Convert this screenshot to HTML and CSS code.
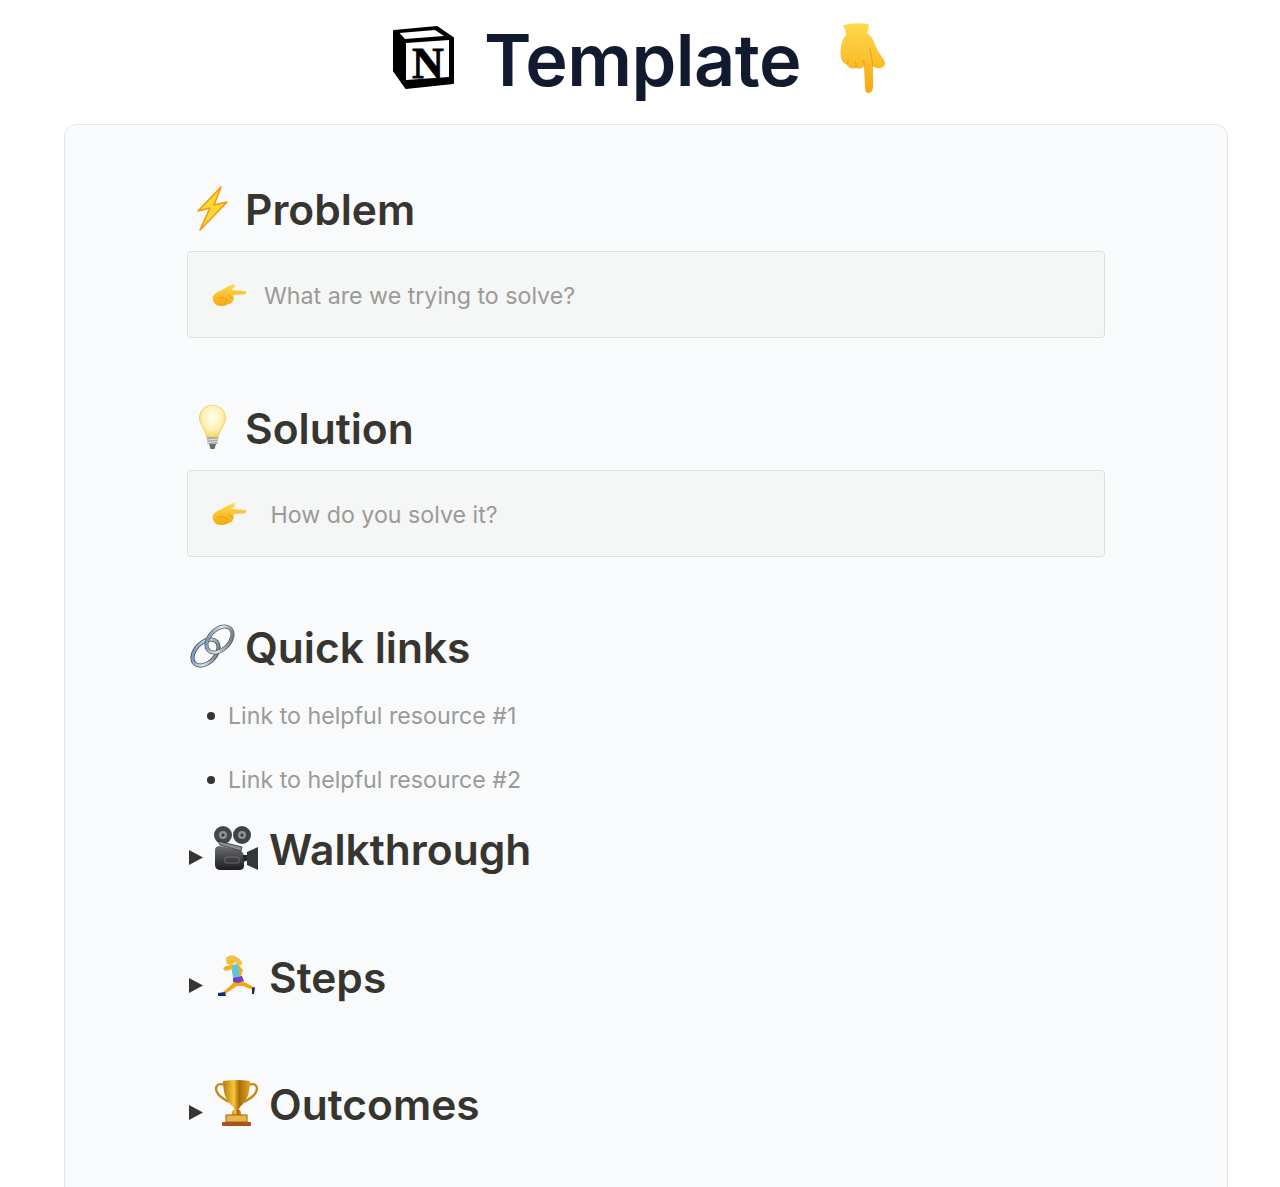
FILE: index.html
```html
<!DOCTYPE html>
<html lang="en">
<head>
<meta charset="utf-8">
<title>Notion Template</title>
<link rel="stylesheet" href="styles.css">
</head>
<body>
<svg class="defs" width="0" height="0" aria-hidden="true">
  <defs>
    <linearGradient id="skin" x1="0" y1="0" x2="0" y2="1"><stop offset="0" stop-color="#ffd84f"/><stop offset="1" stop-color="#f6a90f"/></linearGradient>
    <radialGradient id="glass" cx=".5" cy=".38" r=".6"><stop offset="0" stop-color="#fffef2"/><stop offset=".6" stop-color="#fff3b8"/><stop offset="1" stop-color="#f6d659"/></radialGradient>
    <linearGradient id="gold" x1="0" y1="0" x2="1" y2="0"><stop offset="0" stop-color="#b97a0c"/><stop offset=".4" stop-color="#f6c63c"/><stop offset=".6" stop-color="#a86a08"/><stop offset="1" stop-color="#e2a524"/></linearGradient>
    <linearGradient id="steel" x1="0" y1="0" x2="1" y2="1"><stop offset="0" stop-color="#4f7fb8"/><stop offset=".5" stop-color="#dfe7ef"/><stop offset="1" stop-color="#48586c"/></linearGradient>
    <linearGradient id="body" x1="0" y1="0" x2="0" y2="1"><stop offset="0" stop-color="#6a6e74"/><stop offset="1" stop-color="#1d1a1c"/></linearGradient>
    <symbol id="hand-right" viewBox="0 0 35 22">
      <path fill="url(#skin)" d="M.5 13 Q3 8 9 6.500 Q14 3 21 .3 Q23.500 .3 22.500 3 L19.500 6 L33 7 Q35.500 8.500 33 10.300 L21 11 Q22.500 14 21 16 Q20.500 19.500 16.500 20 Q13 22.500 7 21.800 Q1 21 .5 13 Z"/>
      <path fill="none" stroke="#dd9208" stroke-width=".7" d="M6 14 Q12 13 15 15 M12 20 Q15 18 15 15 M16 11 Q19 12 21 16"/>
    </symbol>
    <symbol id="caret" viewBox="0 0 14 15">
      <path fill="#37352f" d="M0 0 L14 7.500 L0 15 Z"/>
    </symbol>
  </defs>
</svg>

<header class="title">
  <svg class="logo" viewBox="0 0 61 64" role="img" aria-label="Notion">
    <path fill="#000" stroke="#000" stroke-width="2" stroke-linejoin="round" d="M1 6 L44 2 L60 13 L60 58 L13 63 L1 46 Z"/>
    <path fill="#fff" d="M6.500 8 L42 5 L51 11 L12 14 Z"/>
    <path fill="#fff" d="M13 18 L56 15 L56 52 L13 55 Z"/>
    <text class="logo-n" x="35" y="53" text-anchor="middle">N</text>
  </svg>
  <h1 class="title-text">Template</h1>
  <svg class="point-down" viewBox="0 0 47 71" role="img" aria-label="pointing down">
    <path fill="url(#skin)" d="M3 3 Q15 0 28 2 Q30 4 27 11 Q33 15 35 23 Q38 30 44 38 Q47 44 41 46 Q36 47 33 44 L33 66 Q32 71 28.500 71 Q25 71 25 66 L24 44 Q22 48 16 46 Q10 48 6 42 Q0 40 0.500 30 Q1 18 6 13 Q6 8 3 3 Z"/>
    <path fill="none" stroke="#e39a0c" stroke-width=".8" d="M8 37 Q9 41 6 42 M15 39 Q17 43 16 46 M23 38 Q25 41 24 44 M30 26 L33 44"/>
  </svg>
</header>

<main class="card">
  <section class="block">
    <h2 class="heading">
      <span class="emoji">
        <svg class="bolt" viewBox="0 0 31 45"><path fill="#ffd83a" stroke="#f39a0a" stroke-width="1.600" stroke-linejoin="round" d="M24 1 L1 25 L13 22 L3 44 L30 16 L17 19 Z"/></svg>
      </span>
      Problem
    </h2>
    <div class="callout">
      <svg class="hand"><use href="#hand-right"/></svg>
      <span class="muted">What are we trying to solve?</span>
    </div>
  </section>

  <section class="block">
    <h2 class="heading">
      <span class="emoji">
        <svg class="bulb" viewBox="0 0 27 44">
          <path fill="url(#glass)" stroke="#eccb57" stroke-width=".8" d="M13.500 .5 C5 .5 .5 6.500 .5 13 C.5 20 6 23 8 33 L19 33 C21 23 26.500 20 26.500 13 C26.500 6.500 22 .5 13.500 .5 Z"/>
          <path fill="#a9a9a7" d="M8 32 H19 L18.500 39 H8.500 Z"/>
          <path fill="#6c6b6a" d="M10 39 H17 L15.500 44 H11.500 Z"/>
          <path stroke="#e8e8e6" stroke-width="1" d="M8.500 35 L18.500 34 M8.500 37.500 L18.500 36.500"/>
        </svg>
      </span>
      Solution
    </h2>
    <div class="callout">
      <svg class="hand"><use href="#hand-right"/></svg>
      <span class="muted">&nbsp;How do you solve it?</span>
    </div>
  </section>

  <section class="block block-links">
    <h2 class="heading">
      <span class="emoji">
        <svg class="link" viewBox="0 0 45 44" fill="none">
          <g transform="rotate(-45 15.500 28.500)"><ellipse cx="15.500" cy="28.500" rx="15.500" ry="10" stroke="#39424e" stroke-width="4"/><ellipse cx="15.500" cy="28.500" rx="15.500" ry="10" stroke="url(#steel)" stroke-width="2.600"/></g>
          <g transform="rotate(-45 29.500 15.500)"><ellipse cx="29.500" cy="15.500" rx="15.500" ry="10" stroke="#5e5a58" stroke-width="4"/><ellipse cx="29.500" cy="15.500" rx="15.500" ry="10" stroke="url(#steel)" stroke-width="2.600"/></g>
        </svg>
      </span>
      Quick links
    </h2>
    <ul class="links">
      <li><span class="muted">Link to helpful resource #1</span></li>
      <li><span class="muted">Link to helpful resource #2</span></li>
    </ul>
  </section>

  <section class="toggle toggle-first">
    <h2 class="heading">
      <svg class="caret"><use href="#caret"/></svg>
      <span class="emoji">
        <svg class="camera" viewBox="0 0 44 44">
          <circle cx="9" cy="9" r="9" fill="#44474c"/><circle cx="9" cy="9" r="4" fill="#8e9297"/><circle cx="9" cy="9" r="1.600" fill="#33353a"/>
          <circle cx="28" cy="9" r="9" fill="#3e4146"/><circle cx="28" cy="9" r="4" fill="#8e9297"/><circle cx="28" cy="9" r="1.600" fill="#33353a"/>
          <path fill="url(#body)" d="M1 24 Q1 20 6 20 L24 24 Q30 25 30 31 L30 40 Q30 44 25 44 L7 44 Q1 44 1 39 Z"/>
          <path fill="#8a8d92" stroke="#2c2c30" stroke-width=".8" d="M4 15 L28 21 L27 25 L6 19 Z"/>
          <rect x="11" y="31" width="14" height="6" rx="1" fill="none" stroke="#77797c" stroke-width=".8"/>
          <path fill="#26262a" d="M29 29 L35 29 L35 34 L29 36 Z"/>
          <path fill="#33363b" d="M33 26 L44 21 L44 44 L33 39 Z"/>
        </svg>
      </span>
      Walkthrough
    </h2>
  </section>

  <section class="toggle">
    <h2 class="heading">
      <svg class="caret"><use href="#caret"/></svg>
      <span class="emoji">
        <svg class="runner" viewBox="0 0 37 41">
          <path fill="#f0a818" d="M17 26 L21 26 L26 27 L36 32 L35 35 L25 31 L19 31 L13 35 L7 39 L5 37 L11 32 Z"/>
          <path fill="#17276b" d="M0 38 L7 37 L8 41 L0 41 Z"/>
          <path fill="#17276b" d="M34 33 L37 32 L36 39 L34 39 Z"/>
          <path fill="#7a3fc0" d="M15 22 L24 21 L26 26 L20 28 L15 27 Z"/>
          <path fill="#5fc4e0" d="M13 10 L20 9 L23 21 L15 23 Z"/>
          <path fill="#f4ae1f" d="M14 10 L8 11 L5 13 L7 16 L11 15 L15 14 Z"/>
          <path fill="#f4ae1f" d="M20 9 L25 15 L23 21 L21 20 L21 15 Z"/>
          <circle cx="12.500" cy="5.500" r="4.500" fill="#f9bd2b"/>
          <path fill="#f3c14a" d="M8 3 Q12 -1 17 1 Q21 3 24 7 Q24 12 20 10 Q17 7 14 6 Q10 6 8 3 Z"/>
        </svg>
      </span>
      Steps
    </h2>
  </section>

  <section class="toggle">
    <h2 class="heading">
      <svg class="caret"><use href="#caret"/></svg>
      <span class="emoji">
        <svg class="trophy" viewBox="0 0 43 46">
          <path fill="none" stroke="#c78a16" stroke-width="2.400" d="M10 5 C1 2 0 8 2 12 C4 17 9 19 14 22 M33 5 C42 2 43 8 41 12 C39 17 34 19 29 22"/>
          <path fill="url(#gold)" d="M8 1 Q21 -1 35 1 Q35 17 28 24 Q24 27 23.500 30 L19.500 30 Q19 27 15 24 Q8 17 8 1 Z"/>
          <path fill="url(#gold)" d="M18 30 H25 L27 36 H16 Z"/>
          <rect x="11" y="35" width="21" height="7" fill="#e9b64e" stroke="#a85f15" stroke-width="1"/>
          <rect x="7" y="42" width="29" height="4" rx="1" fill="#a9531a"/>
        </svg>
      </span>
      Outcomes
    </h2>
  </section>
</main>
</body>
</html>
```

FILE: styles.css
```css
html, body {
  margin: 0;
  padding: 0;
  height: 1187px;
  overflow: hidden;
  background: #fff;
}

body {
  font-family: Inter, "Liberation Sans", sans-serif;
  color: #37352f;
}

.defs {
  position: absolute;
}

.title {
  height: 124px;
  display: flex;
  align-items: flex-start;
  justify-content: center;
}

.logo {
  width: 61px;
  height: 64px;
  margin-top: 25px;
}

.logo-n {
  font-family: "Liberation Serif", serif;
  font-weight: 700;
  font-size: 44px;
  fill: #000;
  stroke: #000;
  stroke-width: .8px;
}

.title-text {
  margin: 20px 0 0 30px;
  font-size: 72px;
  line-height: 80px;
  font-weight: 600;
  letter-spacing: -0.6px;
  color: #111a2e;
}

.point-down {
  width: 47px;
  height: 71px;
  margin: 22px 0 0 39px;
}

.card {
  margin: 0 52px 0 64px;
  height: 1100px;
  box-sizing: border-box;
  padding: 60px 122px 0;
  background: #f9fafc;
  border: 1px solid #e3e5e9;
  border-radius: 12px;
}

.heading {
  margin: 0;
  display: flex;
  align-items: center;
  gap: 8px;
  height: 50px;
  font-size: 42.500px;
  line-height: 50px;
  font-weight: 600;
  color: #37352f;
}

.emoji {
  width: 50px;
  height: 46px;
  align-self: flex-start;
  display: flex;
  align-items: center;
  justify-content: center;
  flex: none;
}

.block {
  height: 219px;
}

.callout {
  margin-top: 16px;
  height: 87px;
  box-sizing: border-box;
  padding-left: 24px;
  display: flex;
  align-items: center;
  gap: 17px;
  background: #f5f6f6;
  border: 1px solid #dfe0e0;
  border-radius: 4px;
}

.callout .muted {
  margin-top: 2px;
}

.muted {
  color: #9b9a97;
  font-size: 23.200px;
}

.hand {
  width: 35px;
  height: 22px;
  flex: none;
}

.block-links {
  height: 202px;
}

.links {
  margin: 25px 0 0;
  padding: 0 0 0 20px;
  list-style: none;
}

.links li {
  display: flex;
  align-items: center;
  gap: 13px;
  height: 36px;
  margin-bottom: 28px;
}

.links li::before {
  content: "";
  width: 8px;
  height: 8px;
  border-radius: 50%;
  background: #37352f;
  flex: none;
}

.toggle {
  height: 127.500px;
}

.caret {
  width: 14px;
  height: 15px;
  flex: none;
  margin: 15px 0 0 2px;
}

.bolt { width: 31px; height: 45px; }
.bulb { width: 27px; height: 44px; }
.link { width: 45px; height: 44px; }
.camera { width: 44px; height: 44px; }
.runner { width: 37px; height: 41px; }
.trophy { width: 43px; height: 46px; }
```
